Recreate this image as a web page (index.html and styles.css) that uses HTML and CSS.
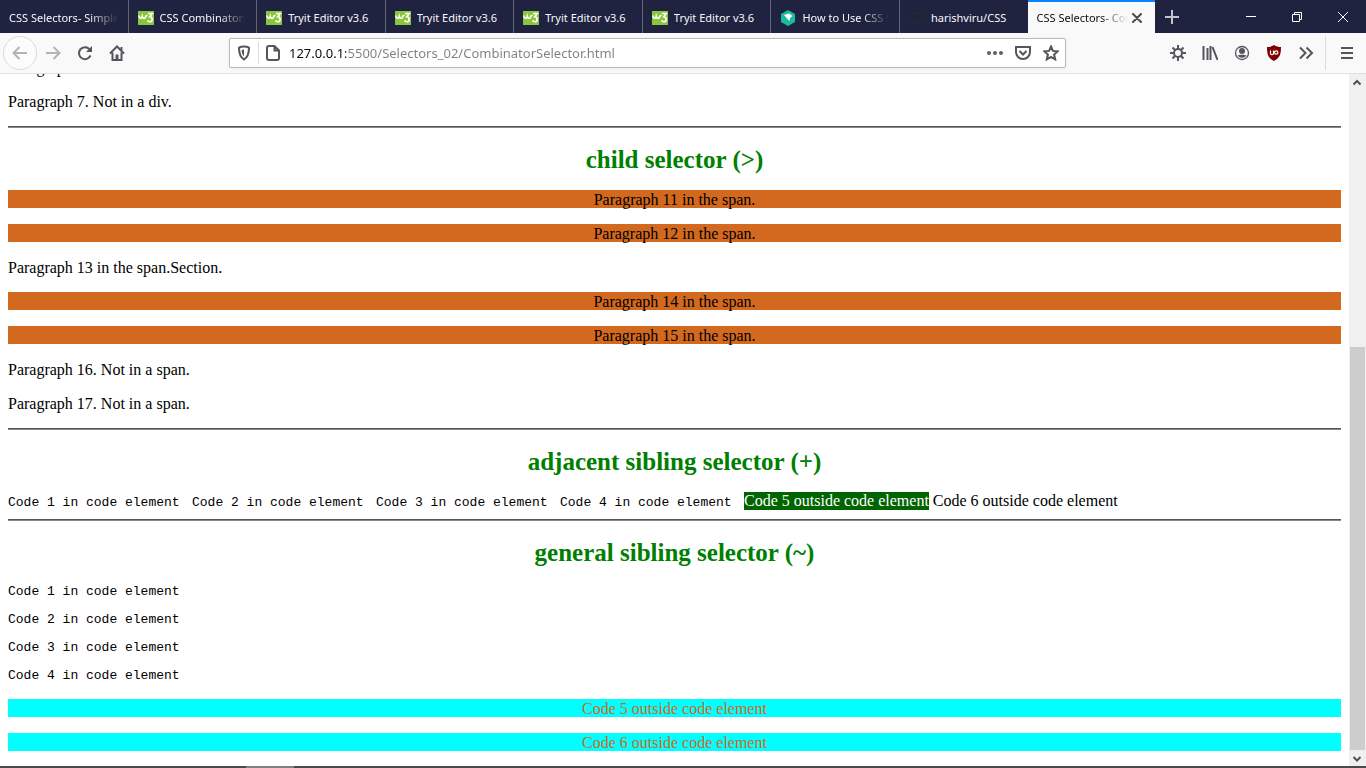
FILE: index.html
```
<!DOCTYPE html>
<html lang="en">
<head>
<meta charset="utf-8">
<title>CSS Selectors- Combinator</title>
<link rel="stylesheet" href="styles.css">
</head>
<body>
<svg class="defs" aria-hidden="true">
  <symbol id="w3" viewBox="0 0 16 16">
    <rect y="1" width="16" height="14" fill="#8ac53f"/>
    <path d="M.8 5.500C1.300 9 3.500 9 4.200 6.300c.7 2.700 3 2.700 3.600 0 .4-.8 1-1 1.800-.6" fill="none" stroke="#fff" stroke-width="1.600"/>
    <path d="M10 3.500h4.200l-2.400 3.300c3.200.2 3 5 0 5-1.200 0-1.900-.5-2.200-1.500" fill="none" stroke="#fff" stroke-width="1.600"/>
  </symbol>
</svg>
<div class="browser">
  <header class="tabs">
    <nav class="tab-list" aria-label="Tabs">
      <button class="tab"><span class="title fade">CSS Selectors- Simple</span></button>
      <button class="tab"><svg class="fav"><use href="#w3"/></svg><span class="title fade">CSS Combinators</span></button>
      <button class="tab"><svg class="fav"><use href="#w3"/></svg><span class="title">Tryit Editor v3.6</span></button>
      <button class="tab"><svg class="fav"><use href="#w3"/></svg><span class="title">Tryit Editor v3.6</span></button>
      <button class="tab"><svg class="fav"><use href="#w3"/></svg><span class="title">Tryit Editor v3.6</span></button>
      <button class="tab"><svg class="fav"><use href="#w3"/></svg><span class="title">Tryit Editor v3.6</span></button>
      <button class="tab"><svg class="fav" viewBox="0 0 16 16"><path d="M8 0l7 4v8l-7 4-7-4V4z" fill="#1abc9c"/><path d="M4 5l5-1.500L12.500 6 10 8l-.5 3L7 8.500z" fill="#fff"/></svg><span class="title fade">How to Use CSS Selectors</span></button>
      <button class="tab last"><svg class="fav" viewBox="0 0 16 16"><path d="M6 15v-3C3 12.500 2.500 11 2 10.500M10 15v-3c2.500-.3 4-1.500 4-4.500 0-1.300-.4-2-1-2.800.2-.8.1-1.500-.2-2.200-1 0-1.700.5-2.300.9a9 9 0 0 0-5 0C4.900 3 4.200 2.500 3.200 2.500 2.900 3.200 2.800 3.900 3 4.700 2.400 5.500 2 6.200 2 7.500 2 10.500 3.500 11.700 6 12" fill="none" stroke="#24292e" stroke-width="1.800"/></svg><span class="title">harishviru/CSS</span></button>
      <button class="tab active"><span class="title fade">CSS Selectors- Combinator</span><svg class="close" viewBox="0 0 10 10"><path d="M1 1l8 8M9 1L1 9" stroke="#4a4a4f" stroke-width="2" stroke-linecap="round"/></svg></button>
    </nav>
    <button class="new-tab" aria-label="New tab"><svg width="14" height="14" viewBox="0 0 14 14"><path d="M7 0v14M0 7h14" stroke="#c4c4cc" stroke-width="2"/></svg></button>
    <div class="window-buttons">
      <button aria-label="Minimize"><svg width="10" height="10"><path d="M0 4.500h10" stroke="#fff"/></svg></button>
      <button aria-label="Restore"><svg width="10" height="10" fill="none" stroke="#fff"><path d="M.5 2.500h7v7h-7zM2.500 2.500v-2h7v7h-2"/></svg></button>
      <button aria-label="Close"><svg width="10" height="10"><path d="M0 0l10 10M10 0L0 10" stroke="#fff"/></svg></button>
    </div>
  </header>

  <div class="toolbar">
    <button class="back" aria-label="Back"><svg class="icon dim" viewBox="0 0 16 16"><path d="M15 8H2M7.500 2L1.500 8l6 6"/></svg></button>
    <button class="tool" aria-label="Forward"><svg class="icon dim" viewBox="0 0 16 16"><path d="M1 8h13M8.500 2l6 6-6 6"/></svg></button>
    <button class="tool" aria-label="Reload"><svg class="icon" viewBox="0 0 16 16"><path d="M13.500 10.500A6 6 0 1 1 12.500 4.200"/><path d="M15 1v6H9z" fill="#55555a" stroke="none"/></svg></button>
    <button class="tool" aria-label="Home"><svg class="icon" viewBox="0 0 16 16"><path d="M1 8.500L8 1.500l7 7M3.500 7.500V15h9V7.500"/><path d="M6.500 15V9.500h3V15z" fill="#55555a" stroke="none"/><path d="M12.500 2v3" /></svg></button>
    <form class="urlbar">
      <svg class="icon shield" viewBox="0 0 16 16"><path d="M8 1.500c2 0 3.800.5 5 1.200 0 5-.5 9-5 11.800-4.500-2.800-5-6.800-5-11.800 1.200-.7 3-1.200 5-1.200z"/><path d="M8 4.500v7C6 9.500 5.700 7.500 5.700 5z" fill="#55555a" stroke="none"/></svg>
      <span class="url-separator"></span>
      <svg class="icon page-icon" viewBox="0 0 16 16"><path d="M9.500 1H4a2 2 0 0 0-2 2v10a2 2 0 0 0 2 2h8a2 2 0 0 0 2-2V5.500zM9.500 1v4.500H14"/></svg>
      <input class="url" type="text" aria-label="Address" value="127.0.0.1:5500/Selectors_02/CombinatorSelector.html">
      <button class="url-action" type="button" aria-label="Page actions"><svg class="icon" viewBox="0 0 16 16"><g fill="#606065" stroke="none"><circle cx="2" cy="8" r="2"/><circle cx="8" cy="8" r="2"/><circle cx="14" cy="8" r="2"/></g></svg></button>
      <button class="url-action" type="button" aria-label="Save to Pocket"><svg class="icon" viewBox="0 0 16 16"><path d="M1 2h14v5a7 7 0 0 1-14 0zM4.500 6L8 9.500 11.500 6"/></svg></button>
      <button class="url-action" type="button" aria-label="Bookmark"><svg class="icon" viewBox="0 0 16 16"><path d="M8 1.500l1.900 4.400 4.800.4-3.600 3.200 1.100 4.900L8 12l-4.200 2.400 1.100-4.900L1.300 6.300l4.800-.4z"/></svg></button>
    </form>
    <button class="tool" aria-label="Customize"><svg class="icon" viewBox="0 0 16 16"><circle cx="8" cy="8" r="4"/><path d="M8 0v4M8 12v4M0 8h4M12 8h4M2.500 2.500l2.500 2.500M11 11l2.500 2.500M13.500 2.500L11 5M5 11l-2.500 2.500"/></svg></button>
    <button class="tool" aria-label="Library"><svg class="icon" viewBox="0 0 16 16"><path d="M1.500 1v14M5.500 3v12M8.500 1v14M10.500 2l5 13"/></svg></button>
    <button class="tool" aria-label="Account"><svg class="icon" viewBox="0 0 16 16"><circle cx="8" cy="8" r="6.500" stroke-width="1.300"/><circle cx="8" cy="6" r="3" fill="#55555a" stroke="none"/><path d="M3.500 10.500c2 -1 7 -1 9 0a5.500 5.500 0 0 1-9 0z" fill="#55555a" stroke="none"/></svg></button>
    <button class="tool" aria-label="uBlock Origin"><svg class="icon" viewBox="0 0 16 16"><path d="M8 0c2 1.500 4.500 2 7 2 0 7-1 11-7 14C2 13 1 9 1 2c2.500 0 5-.5 7-2z" fill="#800000" stroke="none"/><path d="M4.500 5.500v3c0 1.500 3 1.500 3 0v-3M7.500 9.500v-4" stroke="#fff" stroke-width="1.200"/><circle cx="10.200" cy="7.500" r="1.700" stroke="#fff" stroke-width="1.200"/></svg></button>
    <button class="tool" aria-label="More tools"><svg class="icon" viewBox="0 0 16 16"><path d="M2 2.500L7.500 8 2 13.500M8.500 2.500L14 8l-5.500 5.500"/></svg></button>
    <span class="separator"></span>
    <button class="tool" aria-label="Menu"><svg class="icon menu" viewBox="0 0 16 16"><path d="M2 3h12M2 8h12M2 13h12"/></svg></button>
  </div>

  <div class="viewport">
    <main class="page">
      <p>Paragraph 6. Not in a div.</p>
      <p>Paragraph 7. Not in a div.</p>
      <hr>
      <h2>child selector (&gt;)</h2>
      <p class="child">Paragraph 11 in the span.</p>
      <p class="child">Paragraph 12 in the span.</p>
      <p>Paragraph 13 in the span.Section.</p>
      <p class="child">Paragraph 14 in the span.</p>
      <p class="child">Paragraph 15 in the span.</p>
      <p>Paragraph 16. Not in a span.</p>
      <p>Paragraph 17. Not in a span.</p>
      <hr>
      <h2>adjacent sibling selector (+)</h2>
      <div class="codes">
        <code>Code 1 in code element</code>
        <code>Code 2 in code element</code>
        <code>Code 3 in code element</code>
        <code>Code 4 in code element</code>
        <span class="adjacent">Code 5 outside code element</span>
        <span>Code 6 outside code element</span>
      </div>
      <hr class="tight">
      <h2>general sibling selector (~)</h2>
      <pre>Code 1 in code element</pre>
      <pre>Code 2 in code element</pre>
      <pre>Code 3 in code element</pre>
      <pre>Code 4 in code element</pre>
      <p class="sibling">Code 5 outside code element</p>
      <p class="sibling">Code 6 outside code element</p>
    </main>
    <div class="scrollbar">
      <svg class="arrow" viewBox="0 0 16 16"><path d="M4.500 10.500L8 7l3.500 3.500"/></svg>
      <div class="track"><div class="thumb"></div></div>
      <svg class="arrow" viewBox="0 0 16 16"><path d="M4.500 7L8 10.500 11.500 7"/></svg>
    </div>
  </div>
  <footer class="taskbar"><span class="task"></span></footer>
</div>
</body>
</html>
```
FILE: styles.css
```
* { box-sizing: border-box; }
body { margin: 0; background: #fff; color: #000; }
button { margin: 0; padding: 0; border: 0; background: none; font: inherit; color: inherit; }
svg { display: block; flex: none; }
.defs { position: absolute; width: 0; height: 0; }

.browser { display: flex; flex-direction: column; height: 100vh; overflow: hidden; }

/* Tab strip */
.tabs { display: flex; flex: none; height: 33px; background: #202340; color: #f9f9fa; font: 11px/16px "Noto Sans", "Open Sans", sans-serif; }
.tab-list { display: flex; flex: 1; min-width: 0; }
.tab { display: flex; flex: 1 1 0; align-items: center; min-width: 0; padding: 2px 10px 0 9px; border-right: 1px solid #62647a; text-align: left; }
.tab.last { border-right: 0; }
.tab.active { padding-top: 0; border-top: 2px solid #0a84ff; border-right: 0; background: #f9f9fa; color: #0c0c0d; }
.title { flex: 1; min-width: 0; overflow: hidden; white-space: nowrap; }
.fade { mask-image: linear-gradient(to left, transparent, #000 28px); }
.fav { width: 16px; height: 16px; margin-right: 6px; }
.close { width: 10px; height: 10px; margin-left: 4px; margin-right: 3px; }
.new-tab { display: grid; place-items: center; width: 34px; }
.window-buttons { display: flex; margin-left: 39px; }
.window-buttons button { display: grid; place-items: center; width: 46px; }

/* Navigation toolbar */
.toolbar { display: flex; flex: none; align-items: center; height: 41px; padding: 0 3px; border-bottom: 1px solid #e0e0e1; background: #f9f9fa; }
.icon { width: 16px; height: 16px; fill: none; stroke: #55555a; stroke-width: 2; }
.dim { stroke: #b4b4b6; }
.tool { display: grid; place-items: center; width: 32px; height: 32px; }
.back { display: grid; place-items: center; width: 34px; height: 34px; border: 1px solid #dadadb; border-radius: 50%; background: #fcfcfc; }
.urlbar { display: flex; flex: 1; align-items: center; min-width: 0; height: 30px; margin: 0 96px; padding: 0 0 0 6px; border: 1px solid #b9b9ba; border-radius: 2px; background: #fff; box-shadow: 0 1px 4px rgba(0, 0, 0, 0.05); }
.url-separator { width: 1px; height: 22px; margin: 0 6px; background: #dcdcdd; }
.url { flex: 1; min-width: 0; height: 26px; margin-left: 8px; padding: 0; border: 0; outline: 0; background: linear-gradient(to right, #0c0c0d 57px, #808083 57px); -webkit-background-clip: text; background-clip: text; color: transparent; font: 13px/20px "Noto Sans", "Open Sans", sans-serif; }
.url-action { display: grid; place-items: center; width: 28px; height: 28px; }
.separator { width: 1px; height: 34px; margin: 0 5px 0 3px; background: #dcdcdd; }

/* Document */
.viewport { display: flex; flex: 1; min-height: 0; overflow: hidden; }
.page { flex: 1; margin: -16px 8px 0; font: 16px/16px "Liberation Serif", "Times New Roman", serif; }
.page p { margin: 0 0 16px; padding-top: 2px; }
.page hr { height: 2px; margin: 0; border: 0; border-top: 1px solid #555; background: #888; }
.page h2 { margin: 17px 0; padding-top: 2px; color: green; font-size: 25px; line-height: 26px; text-align: center; }
.page pre { margin: 0 0 13px; padding-top: 2px; font: 13px/13px "Liberation Mono", "Courier New", monospace; }
.page code { width: 184px; font: 13px/15px "Liberation Mono", "Courier New", monospace; }
.page .child { background: chocolate; text-align: center; }
.page .sibling { background: cyan; color: chocolate; text-align: center; }
.page pre + .sibling { margin-top: 17px; }
.codes { display: flex; align-items: baseline; height: 19px; line-height: 18px; }
.adjacent { margin-right: 4px; background: darkgreen; color: #fff; }
.page .tight { margin-top: 8px; }

.scrollbar { display: flex; flex: none; flex-direction: column; width: 17px; background: #f0f0f0; }
.arrow { width: 16px; height: 16px; fill: none; stroke: #505050; stroke-width: 2; }
.track { display: flex; flex: 1; flex-direction: column; justify-content: flex-end; }
.thumb { height: 61%; margin-right: 1px; margin-left: 1px; background: #cdcdcd; }

.taskbar { flex: none; height: 2px; background: #4a4a4a; padding-left: 18%; }
.task { display: block; width: 48px; height: 2px; background: #808080; }
```
